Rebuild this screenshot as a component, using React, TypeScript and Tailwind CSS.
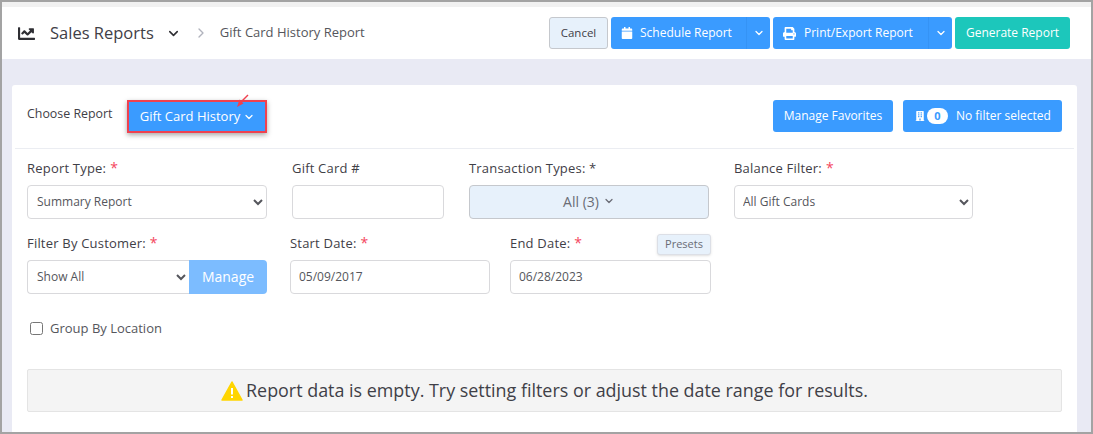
import { ChevronDown, ChevronRight } from "lucide-react";
import { FaCalendar, FaPrint, FaBuilding, FaChartLine } from "react-icons/fa";

const Required = () => <span className="ml-[4px] text-[14px] leading-none text-[#f4465e]">*</span>;

const Label: React.FC<{ text: string; required?: boolean }> = ({ text, required }) => (
    <label className="block h-[17px] text-[13px] leading-[17px] text-[#3f4047] tracking-[0.2px]">
        {text}
        {required && <Required />}
    </label>
);

const fieldClass =
    "h-[34px] rounded-[4px] border border-[#d9d9dc] bg-white pb-[2px] text-[12px] text-[#55565c] outline-none";

const SplitButton: React.FC<{ icon: React.ReactNode; text: string; width: string }> = ({ icon, text, width }) => (
    <div className={`flex h-[32px] items-center rounded-[3px] bg-[#3a9bff] text-[12px] text-white ${width}`}>
        <div className="flex flex-1 items-center pl-[10px]">
            {icon}
            <span>{text}</span>
        </div>
        <div className="flex h-full w-[24px] items-center justify-center border-l border-[#3593f5]">
            <ChevronDown size={12} strokeWidth={2.5} />
        </div>
    </div>
);

const App: React.FC = () => {
    return (
        <div className="h-[434px] w-[1093px] overflow-hidden border-x-2 border-b-2 border-t-2 border-[#a3a3a3] bg-[#e9eaf4] font-['Open_Sans',sans-serif]">
            <div className="h-[5px] bg-[#f1f1f1]" />
            {/* Header */}
            <div className="flex h-[52px] items-center justify-between bg-white pl-[16px] pr-[21px]">
                <div className="flex items-center">
                    <FaChartLine size={17} className="text-[#2e2e33]" />
                    <span className="ml-[15px] text-[16.5px] text-[#3f4047]">Sales Reports</span>
                    <ChevronDown size={15} strokeWidth={2.5} className="ml-[12px] text-[#2e2e33]" />
                    <ChevronRight size={16} strokeWidth={2} className="ml-[12px] text-[#b1b3bd]" />
                    <span className="ml-[11px] text-[13px] text-[#55565c]">Gift Card History Report</span>
                </div>
                <div className="flex items-center gap-[3px]">
                    <div className="flex h-[32px] w-[59px] items-center justify-center rounded-[3px] border border-[#c5c8cd] bg-[#e7f1fb] text-[11.5px] text-[#3f4047]">
                        Cancel
                    </div>
                    <SplitButton icon={<FaCalendar size={12} className="mr-[7px]" />} text="Schedule Report" width="w-[159px]" />
                    <SplitButton icon={<FaPrint size={13} className="mr-[8px]" />} text="Print/Export Report" width="w-[179px]" />
                    <div className="flex h-[32px] w-[115px] items-center justify-center rounded-[3px] bg-[#1cc7bb] text-[12px] text-white">
                        Generate Report
                    </div>
                </div>
            </div>

            {/* Card */}
            <div className="ml-[10px] mr-[14px] mt-[26px] h-[360px] rounded-[3px] bg-white px-[3px]">
                <div className="flex h-[64px] items-start justify-between border-b border-[#ebedf2] pl-[12px] pr-[12px]">
                    <div className="flex items-start">
                        <span className="mt-[20px] w-[100px] text-[12.4px] leading-[17px] text-[#3f4047]">Choose Report</span>
                        <div className="relative mt-[15px] flex h-[33px] w-[140px] items-center justify-center border-2 border-[#f0414f] bg-[#3a9bff] pl-[1px] text-[13px] text-white shadow-[0_2px_5px_rgba(0,0,0,0.35)]">
                            Gift Card History
                            <ChevronDown size={12} strokeWidth={2.5} className="ml-[3px]" />
                            <svg className="absolute -top-[9px] left-[106px]" width="16" height="16" viewBox="0 0 16 16">
                                <path d="M13 2 L6 9" stroke="#f0414f" strokeWidth="1.5" fill="none" />
                                <path d="M2 14 L8.5 10.5 L4.5 6.5 Z" fill="#f0414f" />
                            </svg>
                        </div>
                    </div>
                    <div className="mt-[15px] flex items-center gap-[10px]">
                        <div className="flex h-[32px] w-[120px] items-center justify-center rounded-[3px] bg-[#3a9bff] text-[12px] text-white">
                            Manage Favorites
                        </div>
                        <div className="flex h-[32px] w-[159px] items-center rounded-[3px] bg-[#3a9bff] pl-[12px] text-[12px] text-white">
                            <FaBuilding size={10} />
                            <span className="ml-[2px] flex h-[16px] w-[21px] items-center justify-center rounded-full bg-white text-[11px] font-bold text-[#3a9bff]">
                                0
                            </span>
                            <span className="ml-[8px]">No filter selected</span>
                        </div>
                    </div>
                </div>

                {/* Row 1 */}
                <div className="mt-[11px] flex gap-[25px] pl-[12px]">
                    <div className="w-[240px]">
                        <Label text="Report Type:" required />
                        <select className={`${fieldClass} mt-[8px] w-full pl-[5px]`} defaultValue="Summary Report">
                            <option>Summary Report</option>
                        </select>
                    </div>
                    <div className="w-[152px]">
                        <Label text="Gift Card #" />
                        <input className={`${fieldClass} mt-[8px] w-full px-[8px]`} />
                    </div>
                    <div className="w-[240px]">
                        <Label text="Transaction Types: *" />
                        <div className="mt-[8px] flex h-[34px] items-center justify-center rounded-[4px] border border-[#c5c8cd] bg-[#e7f1fb] pb-[2px] text-[14px] text-[#6a6c75]">
                            All (3)
                            <ChevronDown size={12} strokeWidth={2.5} className="ml-[4px]" />
                        </div>
                    </div>
                    <div className="w-[239px]">
                        <Label text="Balance Filter:" required />
                        <select className={`${fieldClass} mt-[8px] w-full pl-[4px]`} defaultValue="All Gift Cards">
                            <option>All Gift Cards</option>
                        </select>
                    </div>
                </div>

                {/* Row 2 */}
                <div className="mt-[16px] flex pl-[12px]">
                    <div className="w-[240px]">
                        <Label text="Filter By Customer:" required />
                        <div className="mt-[8px] flex">
                            <select className={`${fieldClass} w-[162px] rounded-r-none border-r-0 pl-[5px]`} defaultValue="Show All">
                                <option>Show All</option>
                            </select>
                            <div className="flex h-[34px] w-[78px] items-center justify-center rounded-r-[4px] bg-[#7cbcff] pb-[2px] text-[14px] font-medium text-white">
                                Manage
                            </div>
                        </div>
                    </div>
                    <div className="ml-[23px] w-[200px]">
                        <Label text="Start Date:" required />
                        <input className={`${fieldClass} mt-[8px] w-full px-[8px]`} defaultValue="05/09/2017" />
                    </div>
                    <div className="relative ml-[20px] w-[201px]">
                        <Label text="End Date:" required />
                        <div className="absolute -top-[1px] right-0 flex h-[21px] w-[54px] items-center justify-center rounded-[3px] border border-[#dcdfe6] bg-[#e7f1fb] text-[11px] text-[#6a6c75] shadow-sm">
                            Presets
                        </div>
                        <input className={`${fieldClass} mt-[8px] w-full px-[8px]`} defaultValue="06/28/2023" />
                    </div>
                </div>

                {/* Group by */}
                <div className="mt-[26px] flex items-center pl-[15px]">
                    <input type="checkbox" className="h-[13px] w-[13px]" />
                    <span className="ml-[7px] text-[13px] leading-[16px] text-[#55565c]">Group By Location</span>
                </div>

                {/* Empty message */}
                <div className="mx-[12px] mt-[33px] flex h-[43px] items-center justify-center rounded-[2px] border border-[#e4e4e4] bg-[#f4f4f4] text-[17.9px] text-[#3f4047]">
                    <svg width="22" height="20" viewBox="0 0 22 20" className="mr-[3px]">
                        <path d="M11 1 L21 19 L1 19 Z" fill="#ffd500" stroke="#ffd500" strokeWidth="1.5" strokeLinejoin="round" />
                        <rect x="10" y="7" width="2" height="6.5" fill="#fff" />
                        <rect x="10" y="15" width="2" height="2" fill="#fff" />
                    </svg>
                    Report data is empty. Try setting filters or adjust the date range for results.
                </div>
            </div>
        </div>
    );
};

export default App;
